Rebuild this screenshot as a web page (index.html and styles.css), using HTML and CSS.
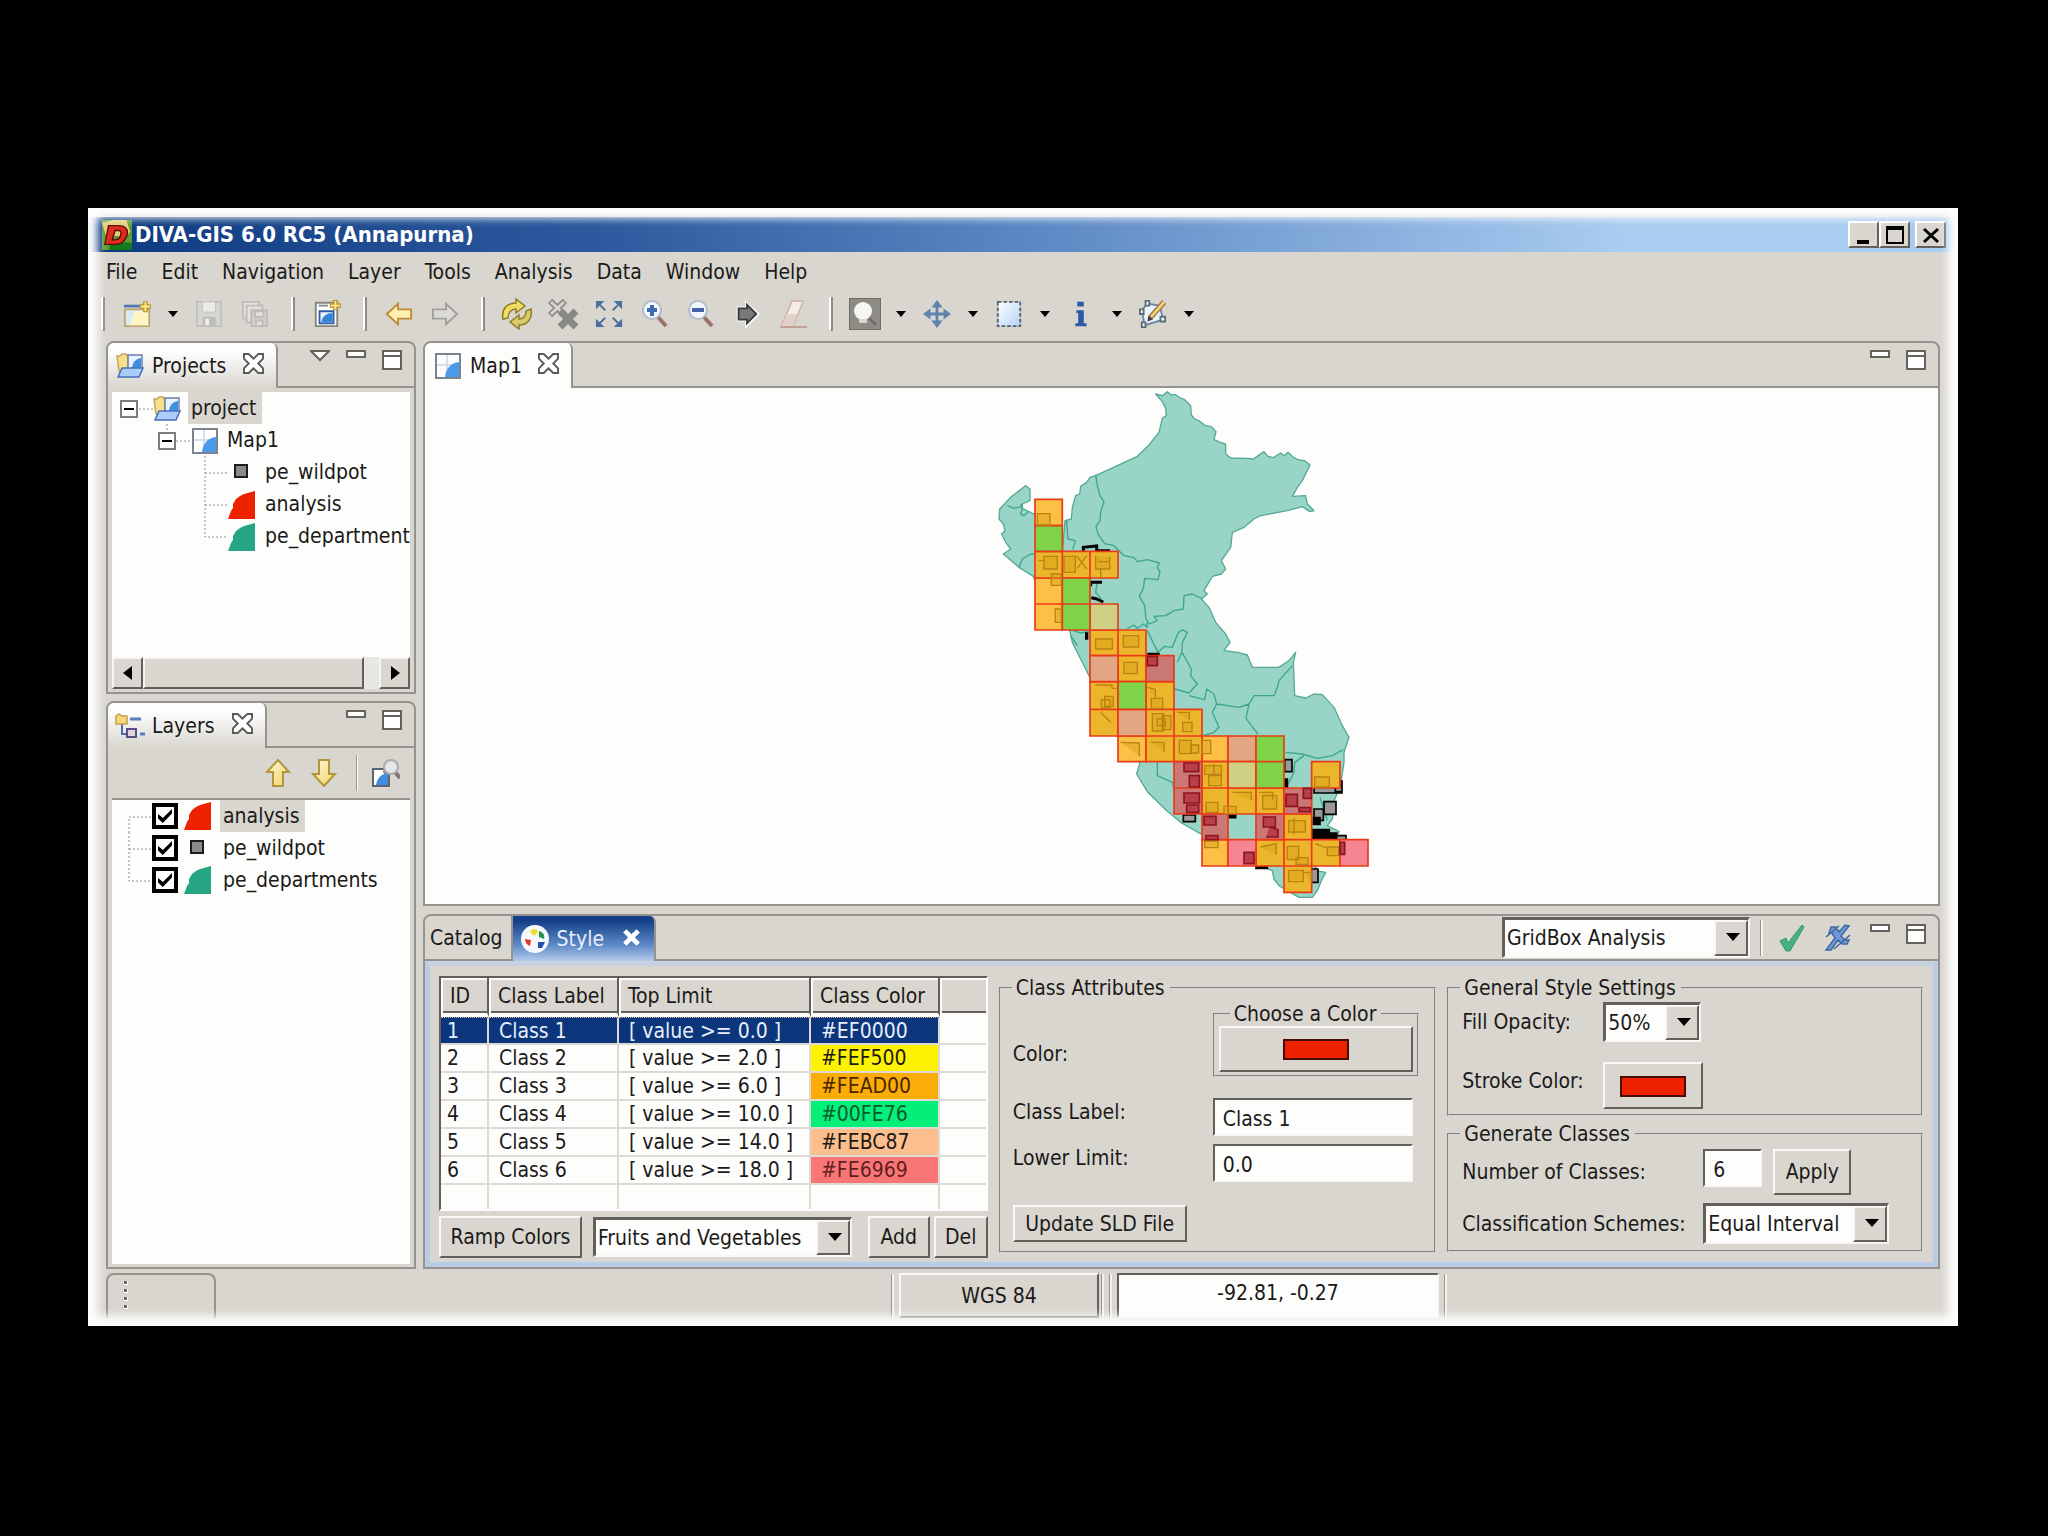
FILE: index.html
```html
<!DOCTYPE html>
<html lang="en">
<head>
<meta charset="utf-8">
<title>DIVA-GIS 6.0 RC5 (Annapurna)</title>
<link rel="stylesheet" href="styles.css">
</head>
<body>
<svg class="defs" aria-hidden="true">
  <defs>
    <linearGradient id="gold" x1="0" y1="0" x2="1" y2="1"><stop offset="0" stop-color="#fffbe0"/><stop offset="1" stop-color="#f0cf60"/></linearGradient>
    <linearGradient id="sky" x1="0" y1="0" x2="1" y2="1"><stop offset="0" stop-color="#ffffff"/><stop offset="1" stop-color="#b4d3f5"/></linearGradient>
  </defs>
  <symbol id="i-folder" viewBox="0 0 30 26"><path d="M2 3h3l2-2h4l2 3v14H4z" fill="#f7e08a" stroke="#c2a55c" stroke-width="1.5"/><path d="M13 2h14v14H13z" fill="#e8f2ff" stroke="#6a7fa8" stroke-width="1.5"/><path d="M17 15a10 10 0 0 1 9-10v10z" fill="#3f8fe0"/><path d="M3 24l4-9h21l-4 9z" fill="#a9cdf8" stroke="#4a6db8" stroke-width="1.5"/></symbol>
  <symbol id="i-map" viewBox="0 0 26 26"><path d="M1 1h24v24H1z" fill="#fff" stroke="#7b8390" stroke-width="2"/><path d="M2 12h22M12 2v22" stroke="#ccd6e2" stroke-width="1.5"/><path d="M10 24c1-9 6-14 14-15v15z" fill="#4a9be8"/></symbol>
  <symbol id="i-close" viewBox="0 0 22 22"><path d="M1 1h5l5 5 5-5h5v5l-5 5 5 5v5h-5l-5-5-5 5H1v-5l5-5-5-5z" fill="#fff" stroke="#5a5a57" stroke-width="2"/></symbol>
  <symbol id="i-min" viewBox="0 0 20 20"><path d="M1 1h18v6H1z" fill="#fff" stroke="#64625d" stroke-width="2"/></symbol>
  <symbol id="i-max" viewBox="0 0 20 20"><path d="M1 1h18v18H1z" fill="#fff" stroke="#64625d" stroke-width="2"/><path d="M1 6h18" stroke="#64625d" stroke-width="2"/></symbol>
  <symbol id="i-wedge" viewBox="0 0 28 28"><path d="M27 0v28H0l3-8 2-3v-4l3-5 4-3 4-2z"/></symbol>
  <symbol id="i-point" viewBox="0 0 28 28"><path d="M7 7h12v12H7z" fill="#8b8b8b" stroke="#1c1c1c" stroke-width="2"/></symbol>
  <symbol id="i-lens" viewBox="0 0 28 28"><path d="M17 17l8 9" stroke="#9a7468" stroke-width="4"/><circle cx="11" cy="10" r="9" fill="#f1f7fe" stroke="#b3bbc8" stroke-width="2"/></symbol>
  <symbol id="i-caret" viewBox="0 0 10 6"><path d="M0 0h10L5 6z" fill="#000"/></symbol>
</svg>

<main class="window">
  <header class="title">
    <svg class="logo" viewBox="0 0 32 32"><path d="M0 0h32v32H0z" fill="#5c9e33"/><path d="M0 3l12-3h14l4 12-4 6-22-2z" fill="#e3cd7e"/><path d="M8 24h24v8H8z" fill="#127a1b"/><path d="M7 6h10c9 0 12 5 9 12s-7 8-13 8H3zM14 11l-3 10c6 1 8-1 9-5s0-5-6-5z" fill="#e02c1c" stroke="#5a0e08" stroke-width="1.5" fill-rule="evenodd"/></svg>
    <h1>DIVA-GIS 6.0 RC5 (Annapurna)</h1>
    <div class="winbtns">
      <button aria-label="Minimize"><svg viewBox="0 0 20 20"><path d="M3 15h12v4H3z"/></svg></button>
      <button aria-label="Maximize"><svg viewBox="0 0 20 20"><path d="M2 3h16v15H2z" fill="none" stroke="#000" stroke-width="2"/><path d="M1 1h18v4H1z"/></svg></button>
      <button aria-label="Close" class="apart"><svg viewBox="0 0 20 20"><path d="M3 4l14 13M17 4L3 17" stroke="#000" stroke-width="3"/></svg></button>
    </div>
  </header>

  <nav class="menu">
    <a href="#">File</a><a href="#">Edit</a><a href="#">Navigation</a><a href="#">Layer</a><a href="#">Tools</a><a href="#">Analysis</a><a href="#">Data</a><a href="#">Window</a><a href="#">Help</a>
  </nav>

  <div class="toolbar">
    <i class="sep"></i>
    <button aria-label="New"><svg viewBox="0 0 30 30"><path d="M1 5h22v3H1z" fill="#5577b5"/><path d="M2 10h26v18H2z" fill="#d4edfb" stroke="#c3a56a" stroke-width="2"/><path d="M12 12h15v15H7z" fill="#fdf4c8"/><path d="M24 1v12M18 7h12" stroke="#b9962f" stroke-width="5"/><path d="M24 2v10M19 7h10" stroke="#ffeb8d" stroke-width="2"/></svg></button>
    <button class="drop" aria-label="New options"><svg><use href="#i-caret"/></svg></button>
    <button aria-label="Save"><svg viewBox="0 0 30 30"><path d="M2 2h26v26H2z" fill="#d6d5d1" stroke="#c3c1bc" stroke-width="2"/><path d="M8 2h14v11H8z" fill="#ecebe8" stroke="#c3c1bc"/><path d="M8 18h14v10H8z" fill="#bfbdb8"/><path d="M11 20h4v7h-4z" fill="#eee"/></svg></button>
    <button aria-label="Save all"><svg viewBox="0 0 30 30"><g fill="#e4e2de" stroke="#bebcb7" stroke-width="2"><path d="M2 2h17v18H2z"/><path d="M6 6h17v18H6z"/><path d="M11 11h17v17H11z" fill="#d0cfcb"/><path d="M15 12h9v6h-9zM16 22h7v6h-7z"/></g></svg></button>
    <i class="sep"></i>
    <button aria-label="New map"><svg viewBox="0 0 30 30"><path d="M3 3h23v25H3z" fill="#fff" stroke="#85857e" stroke-width="2"/><path d="M6 6h10" stroke="#888" stroke-width="2"/><path d="M7 12h15v13H7z" fill="#eaf4ff" stroke="#335da0" stroke-width="2"/><path d="M9 24c1-7 6-10 12-10v10z" fill="#2f83d8"/><path d="M24 0v11M18 6h12" stroke="#b9962f" stroke-width="5"/><path d="M24 1v9M19 6h10" stroke="#ffeb8d" stroke-width="2"/></svg></button>
    <i class="sep"></i>
    <button aria-label="Back"><svg viewBox="0 0 30 30"><path d="M2 15L14 4v6h14v10H14v6z" fill="#fff0b4" stroke="#bf8d33" stroke-width="2"/></svg></button>
    <button aria-label="Forward"><svg viewBox="0 0 30 30"><path d="M28 15L16 4v6H2v10h14v6z" fill="#dcdad6" stroke="#a19f9b" stroke-width="2"/></svg></button>
    <i class="sep"></i>
    <button aria-label="Refresh"><svg class="wide" viewBox="0 0 32 32"><path d="M2 21C0 11 6 5 15 5V1l9 7-9 7v-4c-5 0-8 4-8 9z" fill="#f0dd62" stroke="#8e7c24" stroke-width="1.5"/><path d="M30 11c2 10-4 16-12 16v4l-9-7 9-7v4c5 0 7-4 7-8z" fill="#d9cb6c" stroke="#8e7c24" stroke-width="1.5"/></svg></button>
    <button aria-label="Stop rendering"><svg class="wide" viewBox="0 0 32 32"><path d="M3 3l15 14M18 3L3 17" stroke="#8a8884" stroke-width="6"/><path d="M4 4l13 12M17 4L4 16" stroke="#d6d4cf" stroke-width="3"/><path d="M13 13l16 16M29 13L13 29" stroke="#8a8884" stroke-width="7"/></svg></button>
    <button aria-label="Full extent"><svg viewBox="0 0 30 30"><path d="M11 11L3 3M19 11l8-8M11 19l-8 8M19 19l8 8" stroke="#4a719d" stroke-width="2"/><path d="M1 1h9L1 10zM29 1v9l-9-9zM1 29v-9l9 9zM29 29h-9l9-9z" fill="#4a719d"/></svg></button>
    <button aria-label="Zoom in"><svg viewBox="0 0 28 28"><use href="#i-lens"/><path d="M11 5v11M6 10h10" stroke="#3d6cb3" stroke-width="4"/></svg></button>
    <button aria-label="Zoom out"><svg viewBox="0 0 28 28"><use href="#i-lens"/><path d="M5 10h12" stroke="#4364a8" stroke-width="4"/></svg></button>
    <button aria-label="Commit"><svg viewBox="0 0 30 30"><path d="M6 9h9V5l11 10-11 11v-5H6z" fill="#777a78" stroke="#fff" stroke-width="4"/><path d="M6 9h9V5l10 10-10 10v-4H6z" fill="#777a78" stroke="#393b3a" stroke-width="2"/></svg></button>
    <button aria-label="Erase"><svg viewBox="0 0 30 30"><path d="M14 1h12L15 29H2z" fill="#f6ebe5" stroke="#c9b0a3" stroke-width="1.5"/><path d="M8 15h12l-5 13H3z" fill="#e3d0c6"/><path d="M2 29h28" stroke="#bda092" stroke-width="2"/></svg></button>
    <i class="sep"></i>
    <button class="on" aria-label="Zoom tool"><svg viewBox="0 0 30 30"><circle cx="13" cy="12" r="9" fill="#f5f5f1"/><path d="M19 19l7 7" stroke="#6a6763" stroke-width="2"/><path d="M9 20h8v4H9z" fill="#d8d7d2"/></svg></button>
    <button class="drop" aria-label="Zoom options"><svg><use href="#i-caret"/></svg></button>
    <button aria-label="Pan"><svg viewBox="0 0 30 30"><path d="M15 3v24M3 15h24" stroke="#5f84ad" stroke-width="3"/><path d="M15 0l6 8H9zM15 30l-6-8h12zM0 15l8-6v12zM30 15l-8 6V9z" fill="#5f84ad"/></svg></button>
    <button class="drop" aria-label="Pan options"><svg><use href="#i-caret"/></svg></button>
    <button aria-label="Select"><svg viewBox="0 0 30 30"><path d="M3 2h24v26H3z" fill="url(#sky)" stroke="#56626f" stroke-width="2" stroke-dasharray="4 2"/></svg></button>
    <button class="drop" aria-label="Select options"><svg><use href="#i-caret"/></svg></button>
    <button aria-label="Info"><svg viewBox="0 0 30 30"><path d="M11 2h7v5h-7zM10 11h8v14h3v3H9v-3h3V14h-2z" fill="#2c5aa5"/></svg></button>
    <button class="drop" aria-label="Info options"><svg><use href="#i-caret"/></svg></button>
    <button aria-label="Edit geometry"><svg viewBox="0 0 30 30"><path d="M9 4l13 2 4 15-20 6-3-16z" fill="#e9f4fd" stroke="#6d86a5" stroke-width="2"/><g fill="#fff" stroke="#5c6e74" stroke-width="2"><path d="M7 1h4v5H7zM1 10h4v5H1zM3 24h4v5H3zM23 18h5v5h-5z"/></g><path d="M27 2l-15 17" stroke="#a07a3a" stroke-width="6"/><path d="M27 2l-14 16" stroke="#f0d084" stroke-width="3"/><path d="M9 23l1-6 5 4z" fill="#3d3d44"/></svg></button>
    <button class="drop" aria-label="Edit options"><svg><use href="#i-caret"/></svg></button>
  </div>

  <div class="workbench">
    <div class="side">
      <section class="panel">
        <div class="tabs">
          <div class="tab"><svg class="ic30"><use href="#i-folder"/></svg><span>Projects</span><svg class="x"><use href="#i-close"/></svg></div>
          <div class="tabtools"><svg viewBox="0 0 20 20"><path d="M1 1h18l-9 9z" fill="#fff" stroke="#64625d" stroke-width="2"/></svg><svg><use href="#i-min"/></svg><svg><use href="#i-max"/></svg></div>
        </div>
        <div class="inset">
          <ul class="tree">
            <li><svg class="g76" viewBox="0 0 76 32"><path d="M27 17h14" class="dots"/><path d="M9 9h16v16H9z" class="box"/><path d="M12 17h10" class="dash"/><use href="#i-folder" x="40" y="4" width="30" height="26"/></svg><span class="sel">project</span></li>
            <li><svg class="g112" viewBox="0 0 112 32"><path d="M55 0v8M64 17h16" class="dots"/><path d="M47 9h16v16H47z" class="box"/><path d="M50 17h10" class="dash"/><use href="#i-map" x="80" y="4" width="26" height="26"/></svg><span>Map1</span></li>
            <li><svg class="g150" viewBox="0 0 150 32"><path d="M93 0v32M93 17h22" class="dots"/><use href="#i-point" x="116" y="2" width="28" height="28"/></svg><span>pe_wildpot</span></li>
            <li><svg class="g150" viewBox="0 0 150 32"><path d="M93 0v32M93 17h22" class="dots"/><use href="#i-wedge" class="red" x="116" y="3" width="28" height="28"/></svg><span>analysis</span></li>
            <li><svg class="g150" viewBox="0 0 150 32"><path d="M93 0v17h22" class="dots"/><use href="#i-wedge" class="green" x="116" y="3" width="28" height="28"/></svg><span>pe_departments</span></li>
          </ul>
          <div class="hscroll"><button aria-label="Scroll left"><svg viewBox="0 0 10 14"><path d="M9 0v14L0 7z"/></svg></button><i class="thumb"></i><button aria-label="Scroll right"><svg viewBox="0 0 10 14"><path d="M1 0v14l9-7z"/></svg></button></div>
        </div>
      </section>

      <section class="panel">
        <div class="tabs">
          <div class="tab"><svg class="ic30" viewBox="0 0 30 26"><path d="M7 9v12h6" fill="none" stroke="#4a6db0" stroke-width="2"/><path d="M1 3l3-2 3 2h5v8H1z" fill="#f5d67a" stroke="#c5a050" stroke-width="1.5"/><path d="M12 16h9v8h-9z" fill="#e2d6df" stroke="#574f86" stroke-width="2"/><path d="M15 6h11M25 21h5" stroke="#5a7cc0" stroke-width="3"/></svg><span>Layers</span><svg class="x"><use href="#i-close"/></svg></div>
          <div class="tabtools"><svg><use href="#i-min"/></svg><svg><use href="#i-max"/></svg></div>
        </div>
        <div class="laytools">
          <button aria-label="Move up"><svg viewBox="0 0 28 28"><path d="M14 1l11 12h-6v14H9V13H3z" fill="url(#gold)" stroke="#b3963c" stroke-width="2"/></svg></button>
          <button aria-label="Move down"><svg viewBox="0 0 28 28"><path d="M14 27L3 15h6V1h10v14h6z" fill="url(#gold)" stroke="#b3963c" stroke-width="2"/></svg></button>
          <i></i>
          <button aria-label="Zoom to layer"><svg viewBox="0 0 28 28"><path d="M1 10h16v17H1z" fill="#fff" stroke="#5c6470" stroke-width="2"/><path d="M4 26c1-7 5-11 12-12v12z" fill="#3f8fe0"/><path d="M12 14l5-5M23 13l5 6" stroke="#7d7672" stroke-width="4"/><circle cx="19" cy="8" r="7" fill="#e4e7ea" stroke="#a9abae" stroke-width="2"/></svg></button>
        </div>
        <div class="inset lined">
          <ul class="tree layers">
            <li><svg class="g40" viewBox="0 0 40 32"><path d="M39 17H17v15" class="dots"/></svg><input type="checkbox" id="l1" checked><svg class="ic28 red"><use href="#i-wedge"/></svg><label class="sel" for="l1">analysis</label></li>
            <li><svg class="g40" viewBox="0 0 40 32"><path d="M17 0v32M17 17h22" class="dots"/></svg><input type="checkbox" id="l2" checked><svg class="ic28"><use href="#i-point"/></svg><label for="l2">pe_wildpot</label></li>
            <li><svg class="g40" viewBox="0 0 40 32"><path d="M17 0v17h22" class="dots"/></svg><input type="checkbox" id="l3" checked><svg class="ic28 green"><use href="#i-wedge"/></svg><label for="l3">pe_departments</label></li>
          </ul>
        </div>
      </section>
    </div>

    <div class="center">
      <section class="panel editor">
        <div class="tabs">
          <div class="tab"><svg class="ic26"><use href="#i-map"/></svg><span>Map1</span><svg class="x"><use href="#i-close"/></svg></div>
          <div class="tabtools"><svg><use href="#i-min"/></svg><svg><use href="#i-max"/></svg></div>
        </div>
        <div class="canvas">
          <svg class="peru" viewBox="-2 27 1212 1548">
            <path class="land" d="M525 45L545 50 560 38 572 48 582 46 600 57 612 62 630 80 632 108 642 120 655 125 675 140 692 143 706 158 700 182 718 190 735 195V225L750 237 800 238 818 240 850 218 862 232 878 236 900 222 910 230 922 220 938 235 955 243 972 245 988 258 965 305 950 325 935 352 975 350 980 375 1000 395 988 398 965 383 920 395 840 410 820 420 790 445 755 460 750 505 722 545 735 570 722 585 695 592 670 635 680 645 662 660 685 685 705 730 735 765 748 790 730 815 770 820 800 828 815 865H895L925 845 945 820 938 850 942 950 975 957 1000 945 1025 947 1060 985 1085 1040 1105 1075 1090 1120V1150L1078 1225 1060 1265 1055 1320 1040 1340 1075 1358 1062 1385 1010 1440 1005 1475 1035 1480 1022 1505 1010 1535 995 1555 955 1555 920 1535 895 1520 880 1500 875 1475 825 1455 770 1425 720 1385 655 1362 600 1330 555 1292 500 1238 468 1185 478 1150 440 1110 400 1060 350 970 325 890 300 840 275 790 265 745 225 720 180 660 158 592 115 565 68 525 90 510 75 490 63 465 73 455 68 435 55 420 57 390 90 355 135 320 148 330V365L125 375 125 388 160 405 175 440 245 517 253 425 272 420 275 385 285 350 297 345 300 322 318 310 328 295 345 290 405 262 470 232 505 198 535 160 545 118 557 110 555 88 545 68z"/>
            <path class="edge" d="M345 287L350 320 358 350 370 368 360 400 358 425 346 442 352 465 372 494 400 500 430 530 460 536 470 548 500 542 536 552 530 565 538 580 532 602 492 598 488 628 476 652 492 680 496 720 506 735 530 725 520 712 555 710 580 695 608 690 610 650 635 645 665 660M258 425L262 480 284 485 276 512M80 380L100 388 125 382 120 375M125 388L120 405 130 410 142 398M115 565L125 540 150 525 163 525M440 748L460 738 470 748 488 735 500 745 498 730M500 755L532 820 552 802 575 805 592 762 605 752 620 760 605 790 604 820 590 850M604 820L632 870 630 890 650 915 625 942 582 930M625 950L672 962 678 930 700 945 708 975 695 1000 715 1045 700 1060 668 1070M708 975L775 985 805 975 820 950 880 950 890 925 895 905 935 860M805 975L796 1018 812 1040 832 1065M915 1120L965 1125 1010 1138 1055 1130 1088 1112M970 1130L942 1150 940 1180 920 1220M530 1150V1190L575 1210 582 1240M265 750L300 762 325 758M270 770L290 800M350 610L345 640 362 660M1040 1325L1018 1255"/>
            <g class="marks"><path d="M308 517v-12l40-4v14h40M330 622v-12h34M332 656l14 3 22 10" fill="none" stroke-width="9"/><path d="M318 760v22M500 826h32v20" fill="none" stroke-width="10"/><path d="M912 1142h22v36h-22zM1030 1268h36v38h-36zM1000 1290h28v34h-28zM608 1308h36v20h-36zM1062 1370h34v30h-34zM990 1470h22v40h-22zM1000 1218h84v24h-84zM1064 1206h20v32h-20z"/><path d="M996 1352h50v30h-50zM1046 1362h22v20h-22zM998 1316h20v20h-20zM912 1200h8v26h-8zM826 1458h34v10h-34zM745 1308h20v8h-20z" fill="#000"/></g>
            <path class="cell or" d="M163 361H245V440H163zM163 597H245V675H163zM163 675H245V753H163zM412 1071H496V1148H412zM664 1071H742V1148H664zM664 1382H742V1461H664z"/>
            <path class="cell dk" d="M163 517H245V597H163zM245 517H328V597H245zM328 517H412V597H328zM328 753H412V830H328zM412 753H496V830H412zM412 830H496V908H412zM328 908H412V991H328zM496 908H580V991H496zM328 991H412V1071H328zM496 991H580V1071H496zM580 991H664V1071H580zM496 1071H580V1148H496zM580 1071H664V1148H580zM664 1148H742V1227H664zM993 1148H1078V1227H993zM664 1227H742V1305H664zM742 1227H826V1305H742zM826 1227H910V1305H826zM910 1305H993V1382H910zM826 1382H910V1461H826zM910 1382H993V1461H910zM993 1382H1078V1461H993zM910 1461H993V1540H910z"/>
            <path class="cell rd" d="M496 830H580V908H496zM580 1148H664V1227H580zM580 1227H664V1305H580zM910 1227H993V1305H910zM664 1305H742V1382H664zM826 1305H910V1382H826z"/>
            <path class="cell pk" d="M742 1382H826V1461H742zM1078 1382H1162V1461H1078z"/>
            <path class="cell sa" d="M328 830H412V908H328zM412 991H496V1071H412zM742 1071H826V1148H742z"/>
            <path class="cell ye" d="M328 675H412V753H328zM742 1148H826V1227H742z"/>
            <path class="cell gn" d="M163 440H245V517H163zM245 597H328V675H245zM245 675H328V753H245zM412 908H496V991H412zM826 1071H910V1148H826zM826 1148H910V1227H826z"/>
            <path class="spots" d="M170 404h38v34h-38zM190 532h40v38h-40zM174 545h16M250 532h34v48h-34zM288 530l30 40M318 530l-28 38M345 530v40h42v-36M352 548h34M360 570v24M212 585h30v34h-30zM224 690h18v40h-18zM345 780h50v30h-50zM428 770h46v34h-46zM430 850h40v34h-40zM372 952h26v30h-26zM362 962h26v24h-26zM344 918h50v10h14M512 958h34v30h-34zM500 925l24 6v24M515 1004h34v52h-34zM545 1010h26v42h-26zM530 1020h24v20h-24zM606 1030h28v28h-28zM590 1000h36v24M596 1084h36v40h-36zM630 1098h24v24h-24zM664 1084h26v40h-26zM360 1000l30 30M420 1090l56 2v40M510 1090h40v30M672 1160h50v26h-50zM684 1190h38v30h-38zM700 1156v30M676 1270h36v30h-36zM730 1282h36v22h-36zM756 1240h56v24M846 1250h42v40h-42zM836 1240h40v22M1002 1194h44v30h-44zM924 1325h50v34h-50zM940 1316v50M672 1386h40v20h-40zM840 1404l46-10v34M920 1402h34v40h-34zM946 1436h36v20h-36zM1040 1404h34v26h-34zM1004 1394l40 16M924 1474h44v34h-44zM970 1480h22v30"/>
            <path class="redspots" d="M500 832h30v28h-30zM610 1152h44v26h-44zM626 1190h30v34h-30zM610 1242h46v30h-46zM618 1278h36v22h-36zM916 1246h34v36h-34zM968 1228h24v30h-24zM955 1286h34v12h-34zM670 1312h36v26h-36zM676 1370h36v12h-36zM848 1314h36v30h-36zM866 1344l26 8v22h-36M790 1420h30v34h-30zM1078 1390h14v36h-14z"/>
          </svg>
        </div>
      </section>

      <section class="panel style">
        <div class="tabs">
          <a class="plain" href="#">Catalog</a>
          <div class="tab active"><svg class="ic30" viewBox="0 0 30 30"><circle cx="15" cy="15" r="14" fill="#f4f8ff"/><path d="M10 8c2-4 7-4 8 0l-4 4z" fill="#f4dc2c"/><path d="M19 7c4 1 6 4 5 8l-5-2z" fill="#2b9447"/><path d="M18 18h7l-3 6h-4z" fill="#2350b5"/><path d="M5 15l6 1-1 6c-3-1-5-4-5-7z" fill="#e0392a"/></svg><span>Style</span><svg class="x" viewBox="0 0 22 22"><path d="M4 4l14 14M18 4L4 18" stroke="#fff" stroke-width="5"/></svg></div>
          <div class="tabtools">
            <span class="combo scheme"><select aria-label="Style type"><option>GridBox Analysis</option></select></span>
            <i class="bar"></i>
            <button aria-label="Apply style"><svg viewBox="0 0 28 28"><path d="M3 17l6-3 2 5L25 1l2 2-14 24H9z" fill="#43b183" stroke="#3d9068" stroke-width="1"/></svg></button>
            <button aria-label="Revert style"><svg viewBox="0 0 28 28"><path d="M8 3h5l3 5 6-7 4 1-8 10 4 4h4l-2 4h-5l-4-4-7 10H3l9-12-3-5H6zM11 25l16-14M3 13L16 2" fill="#6d9ad8" stroke="#40679f" stroke-width="1.5"/></svg></button>
            <svg><use href="#i-min"/></svg><svg><use href="#i-max"/></svg>
          </div>
        </div>
        <div class="stylebody">
          <div class="classes">
            <div class="tablebox">
              <table>
                <colgroup><col class="c1"><col class="c2"><col class="c3"><col class="c4"><col></colgroup>
                <thead><tr><th>ID</th><th>Class Label</th><th>Top Limit</th><th>Class Color</th><th></th></tr></thead>
                <tbody>
                  <tr class="picked"><td>1</td><td>Class 1</td><td>[ value &gt;= 0.0 ]</td><td>#EF0000</td><td></td></tr>
                  <tr><td>2</td><td>Class 2</td><td>[ value &gt;= 2.0 ]</td><td class="yellow">#FEF500</td><td></td></tr>
                  <tr><td>3</td><td>Class 3</td><td>[ value &gt;= 6.0 ]</td><td class="orange">#FEAD00</td><td></td></tr>
                  <tr><td>4</td><td>Class 4</td><td>[ value &gt;= 10.0 ]</td><td class="mint">#00FE76</td><td></td></tr>
                  <tr><td>5</td><td>Class 5</td><td>[ value &gt;= 14.0 ]</td><td class="peach">#FEBC87</td><td></td></tr>
                  <tr><td>6</td><td>Class 6</td><td>[ value &gt;= 18.0 ]</td><td class="rose">#FE6969</td><td></td></tr>
                  <tr><td></td><td></td><td></td><td></td><td></td></tr>
                </tbody>
              </table>
            </div>
            <div class="rampbar">
              <button class="btn ramp">Ramp Colors</button>
              <span class="combo fruits"><select aria-label="Color ramp"><option>Fruits and Vegetables</option></select></span>
              <button class="btn add">Add</button>
              <button class="btn del">Del</button>
            </div>
          </div>

          <fieldset class="attrs">
            <legend>Class Attributes</legend>
            <div class="row first"><span class="lbl">Color:</span>
              <fieldset class="choose"><legend>Choose a Color</legend><button class="btn" aria-label="Choose a color"><i class="swatch"></i></button></fieldset></div>
            <div class="row second"><label class="lbl" for="cl">Class Label:</label><input class="field" id="cl" value="Class 1"></div>
            <div class="row third"><label class="lbl" for="ll">Lower Limit:</label><input class="field" id="ll" value="0.0"></div>
            <button class="btn update">Update SLD File</button>
          </fieldset>

          <div class="settings">
            <fieldset class="general">
              <legend>General Style Settings</legend>
              <div class="row"><label class="lbl" for="fo">Fill Opacity:</label><span class="combo opacity"><select id="fo"><option>50%</option></select></span></div>
              <div class="row stroke"><span class="lbl">Stroke Color:</span><button class="btn" aria-label="Stroke color"><i class="swatch"></i></button></div>
            </fieldset>
            <fieldset class="generate">
              <legend>Generate Classes</legend>
              <div class="row"><label class="lbl" for="nc">Number of Classes:</label><input class="field num" id="nc" value="6"><button class="btn apply">Apply</button></div>
              <div class="row"><label class="lbl" for="cs">Classification Schemes:</label><span class="combo interval"><select id="cs"><option>Equal Interval</option></select></span></div>
            </fieldset>
          </div>
        </div>
      </section>
    </div>
  </div>

  <footer class="status">
    <div class="trim"><i></i><i></i><i></i><i></i></div>
    <i class="bar"></i>
    <button class="btn crs">WGS 84</button>
    <i class="bar"></i><i class="bar"></i>
    <output class="coords">-92.81, -0.27</output>
    <i class="bar"></i>
    <div class="rest"></div>
  </footer>
</main>
</body>
</html>
```
FILE: styles.css
```css
:root {
  --face: #d9d6cf;
  --line: #96938e;
  --dark: #63605b;
  --paper: #fdfdfc;
  --ink: #1b1a19;
}

* { box-sizing: border-box; }

body {
  margin: 0;
  min-height: 100vh;
  display: flex;
  padding: 208px 90px 210px 88px;
  background: #000;
  color: var(--ink);
  font: 21px/24px "DejaVu Sans Condensed", "Noto Sans", sans-serif;
}

.defs { position: absolute; width: 0; height: 0; }
svg { display: block; flex: none; }
ul { list-style: none; margin: 0; padding: 0; }
a { color: inherit; text-decoration: none; }
button, input, select { font: inherit; color: inherit; margin: 0; padding: 0; border: 0; border-radius: 0; background: none; white-space: nowrap; }

.window {
  position: relative;
  flex: 1;
  min-width: 0;
  display: flex;
  flex-direction: column;
  padding-top: 9px;
  background: var(--face);
}
.window::after {
  content: "";
  position: absolute;
  inset: 0;
  pointer-events: none;
  box-shadow: inset 0 0 8px 10px #fdfdfd;
}

/* Title bar */
.title {
  display: flex;
  align-items: center;
  height: 35px;
  padding: 0 12px 0 14px;
  background: linear-gradient(90deg, #0d3a80 0%, #2f5a9f 28%, #5f8bc6 52%, #a9ccf0 82%, #a9ccf0 100%);
}
.logo { width: 30px; height: 34px; }
h1 { margin: 0 auto 0 3px; font-size: 22px; line-height: 32px; color: #fff; }
.winbtns { display: flex; }
.winbtns button {
  width: 31px; height: 27px;
  display: grid; place-items: center;
  background: var(--face);
  border: 2px solid;
  border-color: #fff var(--dark) var(--dark) #fff;
}
.winbtns .apart { margin-left: 5px; }
.winbtns svg { width: 20px; height: 20px; }

.menu { display: flex; gap: 24px; height: 40px; padding-left: 18px; line-height: 40px; }

/* Toolbar */
.toolbar { display: flex; align-items: center; height: 44px; margin-bottom: 5px; }
.toolbar button { flex: none; width: 46px; height: 34px; display: grid; place-items: center; }
.toolbar button svg { width: 28px; height: 28px; }
.toolbar button svg.wide { width: 32px; height: 32px; }
.toolbar .drop { width: 26px; }
.toolbar .drop svg { width: 10px; height: 6px; }
.toolbar .on svg { width: 32px; height: 32px; background: #8e8b85; border: 1px solid #706d68; }
.toolbar .sep { flex: none; width: 4px; height: 34px; margin: 0 9px 0 13px; border: solid; border-width: 0 2px 1px 2px; border-color: #fff #8f8c86 #8f8c86 #fff; }

/* Panels */
.workbench { flex: 1; display: grid; grid-template-columns: 310px minmax(0, 1fr); gap: 7px; padding: 0 18px; }
.side { display: grid; grid-template-rows: 353px 1fr; gap: 7px; min-width: 0; }
.center { display: grid; grid-template-rows: 1fr auto; gap: 8px; min-width: 0; }
.panel { display: flex; flex-direction: column; min-width: 0; border: 2px solid var(--line); border-radius: 8px 8px 0 0; overflow: hidden; }
.tabs { display: flex; height: 45px; flex: none; }
.tab {
  display: flex; align-items: center;
  padding: 0 12px 0 7px;
  background: linear-gradient(#fdfdfd 20%, var(--face));
  border-right: 2px solid var(--line);
  border-radius: 0 6px 0 0;
}
.tab span { padding: 0 17px 0 7px; }
.tab .x { width: 21px; height: 21px; margin-bottom: 4px; }
.editor .tab { background: var(--paper); padding: 0 12px 0 10px; }
.editor .tab span { padding: 0 16px 0 9px; }
.ic30 { width: 30px; height: 26px; }
.ic28 { width: 28px; height: 28px; }
.ic26 { width: 26px; height: 26px; }
.tabtools { flex: 1; display: flex; justify-content: flex-end; gap: 16px; padding: 7px 12px 0 0; border-bottom: 2px solid var(--line); }
.tabtools > svg { width: 20px; height: 20px; }
.inset { flex: 1; display: flex; flex-direction: column; margin: 4px 4px 3px; background: var(--paper); overflow: hidden; }
.inset.lined { margin-top: 0; border-top: 2px solid var(--line); }

.tree { flex: 1; }
.tree li { display: flex; align-items: center; height: 32px; white-space: nowrap; }
.tree span, .tree label { padding: 0 5px 0 3px; line-height: 32px; }
.tree .sel { background: var(--face); }
.g40 { width: 40px; }
.g76 { width: 76px; }
.g112 { width: 112px; }
.g150 { width: 150px; }
.dots { fill: none; stroke: #8c8c8c; stroke-width: 1; stroke-dasharray: 2 2; }
.box { fill: #fff; stroke: #7d7d7d; stroke-width: 2; }
.dash { stroke: #000; stroke-width: 2; }
.red { fill: #ef2200; }
.green { fill: #25a584; }
.layers input {
  appearance: none;
  width: 26px; height: 26px;
  margin-right: 6px;
  border: 4px solid #000;
  background: #fff;
  display: grid; place-items: center;
}
.layers input:checked::before { content: ""; width: 14px; height: 14px; background: #000; clip-path: polygon(0 35%, 35% 65%, 100% 0, 100% 32%, 35% 100%, 0 68%); }
.layers .ic28 { margin-right: 8px; }

.hscroll { display: flex; height: 32px; background: #e9e7e3; }
.hscroll button, .thumb { border: 2px solid; border-color: #f6f5f3 var(--dark) var(--dark) #f6f5f3; background: var(--face); }
.hscroll button { width: 31px; display: grid; place-items: center; }
.hscroll svg { width: 10px; height: 14px; }
.thumb { flex: 1; margin-right: 15px; }

.laytools { display: flex; justify-content: flex-end; align-items: center; gap: 18px; height: 50px; padding-right: 14px; }
.laytools svg { width: 28px; height: 28px; }
.laytools i { width: 2px; height: 36px; background: #fff; border-left: 1px solid var(--line); margin-right: -4px; }

/* Map */
.canvas { flex: 1; display: flex; justify-content: center; background: var(--paper); }
.peru { width: 404px; max-width: 100%; height: 516px; }
.land { fill: #98d5c6; stroke: #55a994; stroke-width: 4; stroke-linejoin: round; }
.edge { fill: none; stroke: #3da68b; stroke-width: 4; stroke-linejoin: round; }
.marks { fill: #999; stroke: #000; stroke-width: 5; }
.cell { stroke: #ea3a18; stroke-width: 5; }
.or { fill: #fcc046; }
.dk { fill: #ecb62c; }
.rd { fill: #c97875; }
.pk { fill: #f58590; }
.sa { fill: #e3a683; }
.ye { fill: #cfd084; }
.gn { fill: #7fd348; }
.spots { fill: #d79a13; fill-opacity: .4; stroke: #b98212; stroke-width: 4; }
.redspots { fill: #b8404a; stroke: #8f1420; stroke-width: 5; }

/* Style view */
.plain { padding: 0 8px 0 5px; line-height: 44px; border-right: 2px solid var(--line); border-bottom: 2px solid var(--line); }
.tab.active { color: #e7eefb; background: linear-gradient(#123f88 10%, #5f8ac8 65%, #b3cbea); padding: 0 12px 0 7px; }
.tab.active .ic30 { height: 30px; }
.tab.active .x { margin-bottom: 2px; }
.style .tabtools { gap: 16px; padding-top: 0; }
.style .tabtools > svg { margin-top: 8px; }
.style .tabtools button { width: 30px; height: 28px; margin: 8px 1px 0 -1px; }
.style .tabtools button svg { width: 28px; height: 28px; }
.style .tabtools .bar { width: 3px; height: 36px; margin: 4px -1px 0 -7px; }
.bar { border-left: 1px solid var(--line); border-right: 2px solid #f3f2ef; }
.stylebody {
  display: grid;
  grid-template-columns: minmax(0, 548fr) minmax(0, 437fr) minmax(0, 475fr);
  gap: 11px;
  padding: 10px 10px 4px 9px;
  border: 5px solid #b9cbe6;
  border-top-color: #c6d2e2;
}

.btn { background: var(--face); border: 2px solid; border-color: #f8f7f5 var(--dark) var(--dark) #f8f7f5; }
.field { border: 2px solid; border-color: var(--dark) #f8f7f5 #f8f7f5 var(--dark); background: var(--paper); width: 200px; height: 38px; padding: 4px 8px 0; }
.combo { position: relative; display: inline-flex; height: 40px; border: 3px solid; border-width: 3px 2px 2px 3px; border-color: var(--dark) #f8f7f5 #f8f7f5 var(--dark); background: var(--paper); }
.combo select { appearance: none; width: 100%; padding: 0 0 0 2px; outline: 0; }
.combo::after {
  content: "";
  position: absolute;
  top: 0; right: 0; bottom: 0;
  width: 30px;
  pointer-events: none;
  border: 2px solid;
  border-color: #f8f7f5 var(--dark) var(--dark) #f8f7f5;
  background: var(--face);
}
.combo::before {
  content: "";
  position: absolute;
  z-index: 1;
  right: 8px; top: 13px;
  border: 7px solid transparent;
  border-top: 8px solid #000;
  border-bottom: 0;
  pointer-events: none;
}
.scheme { width: 248px; height: 41px; margin: 1px 1px 0 0; }

.tablebox { width: 100%; border: 2px solid; border-color: var(--dark) #fff #fff var(--dark); background: var(--paper); overflow: hidden; }
table { width: 100%; table-layout: fixed; border-collapse: separate; border-spacing: 0; }
.c1 { width: 48px; }
.c2 { width: 130px; }
.c3 { width: 192px; }
.c4 { width: 129px; }
th { height: 39px; padding: 1px 0 0 9px; text-align: left; font-weight: 400; background: var(--face); background-clip: padding-box; border-right: 2px solid var(--dark); border-bottom: 4px solid var(--paper); box-shadow: inset 2px 2px #fbfaf8, inset 0 -2px var(--dark); white-space: nowrap; }
th:last-child { border-right: 0; }
td { height: 28px; padding: 0 0 0 10px; border-right: 2px solid #dddad6; border-bottom: 2px solid #dddad6; line-height: 24px; white-space: nowrap; }
td:first-child { padding-left: 6px; }
td:last-child { border-right: 0; }
tr:last-child td { height: 24px; border-bottom: 0; }
.picked td:not(:last-child) { background: #0c367c; color: #e9eefa; border-top: 1px dotted #c9b98c; }
.yellow { background: #fdf200; }
.orange { background: #fbac06; color: #4c2600; }
.mint { background: #04ee7a; color: #0a5c2e; }
.peach { background: #fbbe8c; }
.rose { background: #fa7676; color: #611f1f; }

.rampbar { display: flex; align-items: center; margin-top: 5px; }
.rampbar .btn { height: 42px; }
.ramp { width: 143px; margin-right: 11px; }
.fruits { width: 259px; }
.add { width: 62px; margin-left: auto; margin-right: 4px; }
.del { width: 54px; }

fieldset { min-width: 0; margin: 0; padding: 0; border: 2px groove #d6d4d0; }
legend { margin-left: 11px; padding: 0 5px 0 4px; line-height: 24px; white-space: nowrap; }
.row { display: flex; align-items: flex-start; }
.lbl { flex: none; line-height: 28px; white-space: nowrap; }
.attrs { margin-bottom: 5px; padding-left: 12px; }
.attrs > legend { margin-left: -1px; }
.attrs .lbl { width: 200px; }
.first { margin-top: 2px; align-items: flex-end; }
.first .lbl { padding-bottom: 9px; }
.second { margin-top: 21px; }
.third { margin-top: 8px; }
.choose { width: 206px; padding: 0 4px 3px; }
.choose .btn { display: grid; place-items: center; width: 100%; height: 46px; }
.swatch { display: block; width: 66px; height: 21px; background: #ef2200; border: 2px solid #4a0d04; }
.update { width: 174px; height: 37px; margin-top: 23px; }

.settings { display: flex; flex-direction: column; gap: 6px; }
.settings fieldset { padding-left: 13px; }
.settings legend { margin-left: -2px; }
.settings .row { align-items: center; }
.general { padding-bottom: 5px; }
.general .lbl { width: 141px; }
.general .row { margin-top: 2px; }
.general .stroke { margin-top: 20px; align-items: flex-start; }
.stroke .lbl { line-height: 38px; }
.stroke .btn { display: grid; place-items: center; width: 100px; height: 47px; padding-top: 2px; }
.opacity { width: 98px; }
.generate { padding-bottom: 6px; }
.generate .lbl { width: 241px; }
.generate .row { margin-top: 3px; }
.generate .row + .row { margin-top: 8px; }
.num { width: 59px; align-self: flex-start; }
.apply { width: 78px; height: 46px; margin-left: 11px; }
.interval { width: 186px; height: 41px; }

/* Status bar */
.status { display: flex; height: 57px; padding: 4px 18px 8px; }
.status .bar { margin: 1px 5px 0 0; }
.trim { width: 110px; padding: 6px 0 0 16px; border: 2px solid var(--line); border-bottom: 0; border-radius: 8px 8px 0 0; }
.trim i { display: block; width: 4px; height: 4px; margin-bottom: 4px; background: #6b6964; border: solid #fff; border-width: 0 1px 1px 0; }
.trim + .bar { margin-left: auto; }
.crs { width: 200px; }
.crs + .bar { margin-left: 2px; }
.coords { width: 322px; border: 2px solid; border-color: var(--dark) #f8f7f5 #f8f7f5 var(--dark); background: var(--paper); text-align: center; line-height: 36px; }
.coords + .bar { margin-left: 5px; }
.rest { width: 488px; }
```
